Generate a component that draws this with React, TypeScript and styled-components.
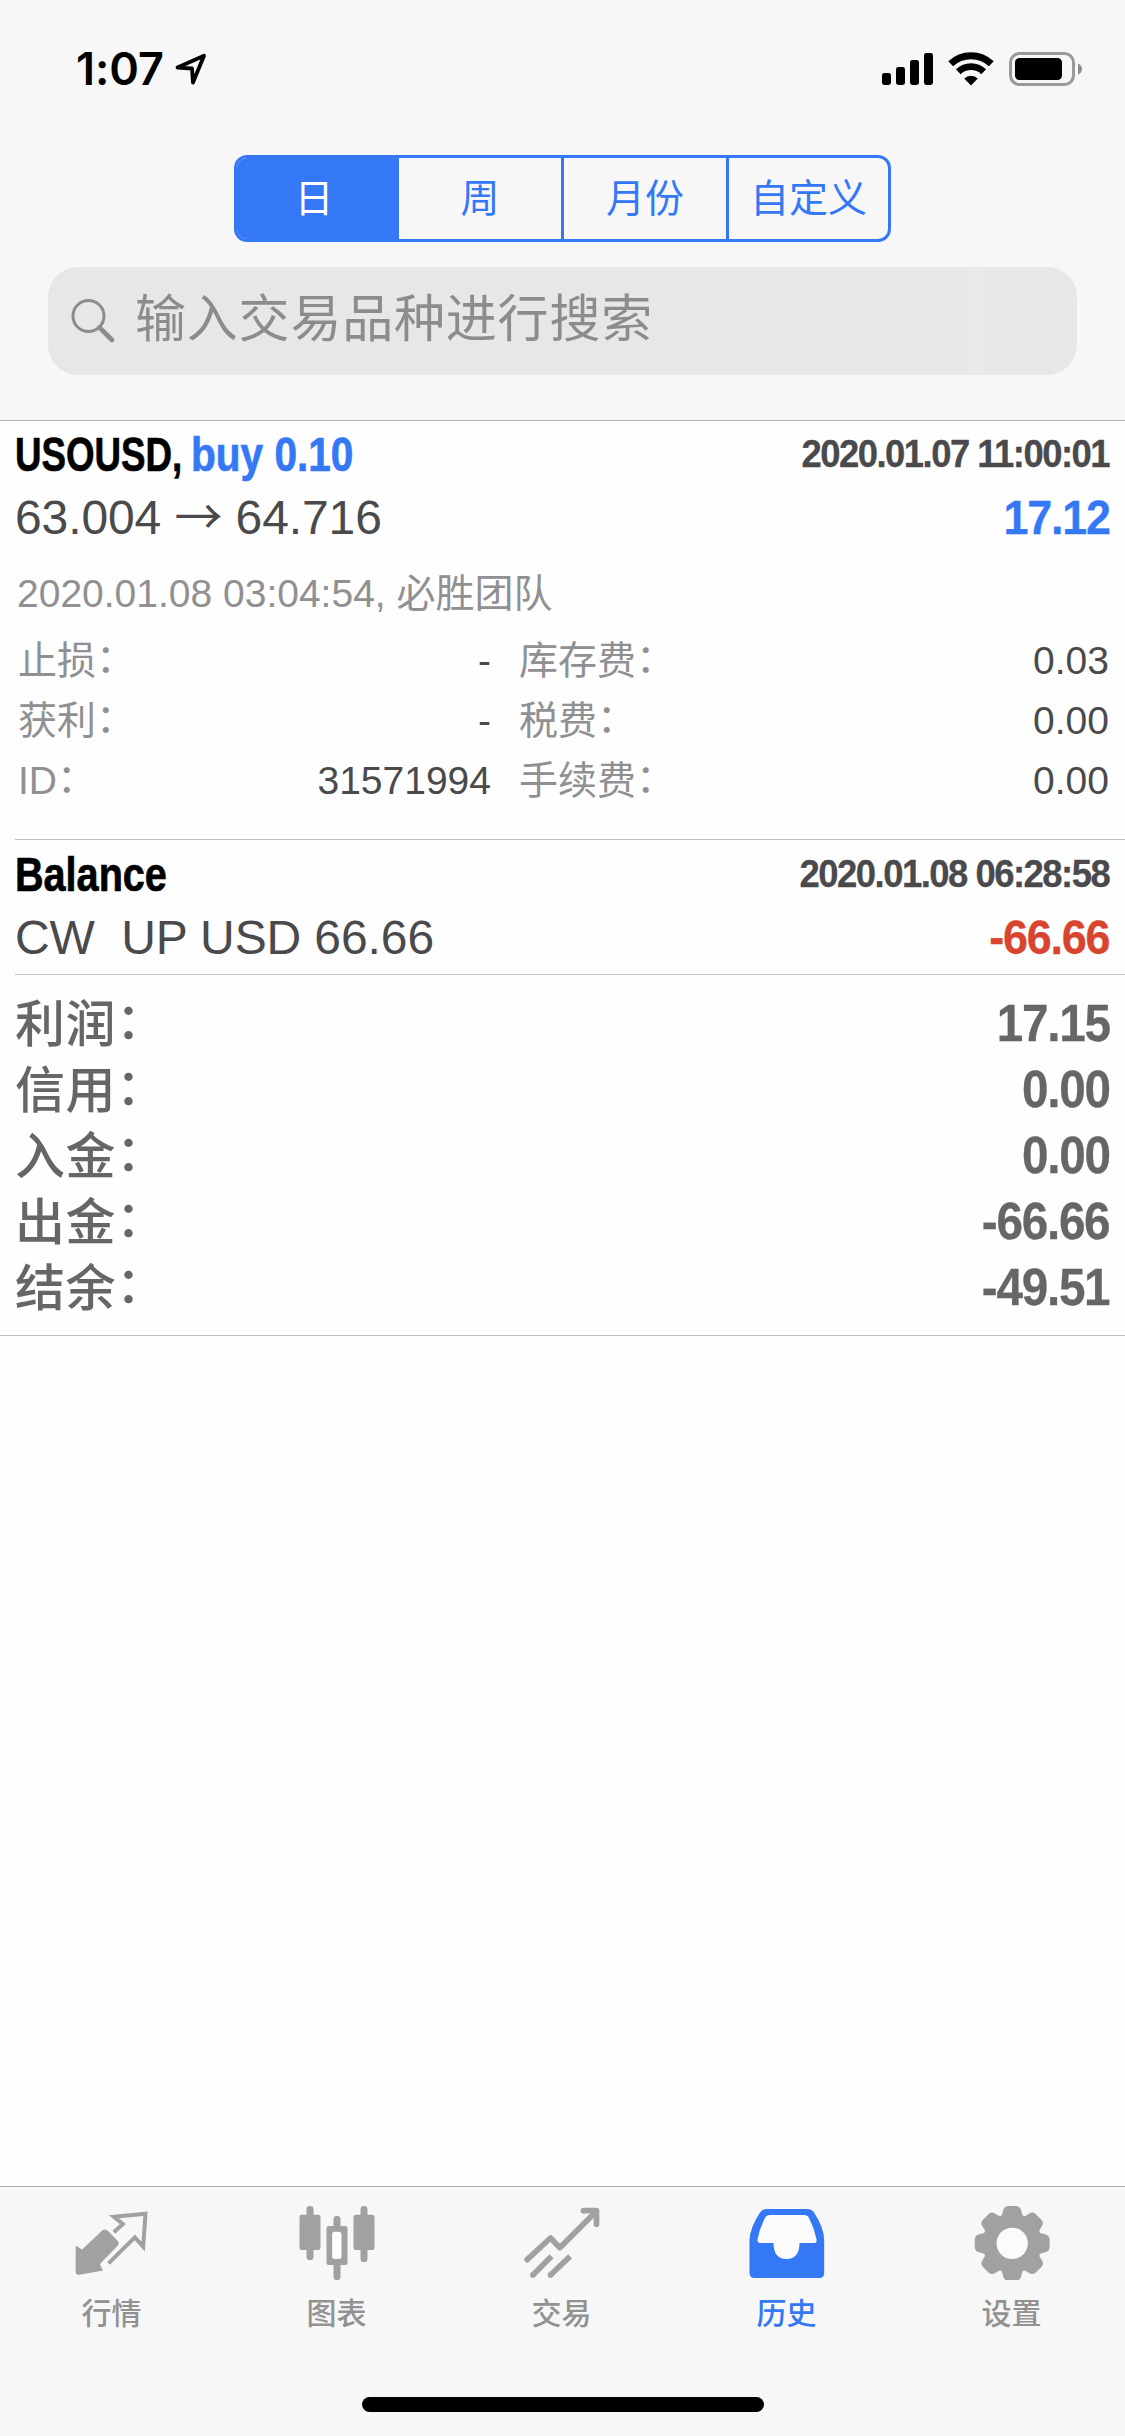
import React from "react";
import styled, { createGlobalStyle } from "styled-components";

const BLUE = "#3478f6";
const RED = "#d9442f";

const GlobalStyle = createGlobalStyle`
  * { box-sizing: border-box; }
  body { margin: 0; background: #fefefe; }
`;

const Screen = styled.div`
  width: 1125px;
  height: 2436px;
  display: flex;
  flex-direction: column;
  overflow: hidden;
  background: #fefefe;
  color: #4a4a4c;
  font-family: "Liberation Sans", "Noto Sans CJK SC", sans-serif;
`;

/* ---------- header ---------- */

const Header = styled.header`
  height: 421px;
  display: flex;
  flex-direction: column;
  background: #f7f7f7;
  border-bottom: 1px solid #b2b2b2;
`;

const StatusBar = styled.div`
  height: 155px;
  padding: 52px 43px 0 76px;
  display: flex;
  justify-content: space-between;
  align-items: flex-start;
`;

const StatusGroup = styled.div<{ $gap: number }>`
  height: 34px;
  display: flex;
  align-items: center;
  gap: ${(p) => p.$gap}px;
`;

const Clock = styled.span`
  font: 600 45px/34px Inter, sans-serif;
  letter-spacing: -0.1px;
  color: #000;
`;

const Segments = styled.nav`
  width: 657px;
  height: 87px;
  margin-left: 234px;
  display: grid;
  grid-template-columns: 162px 165px 165px 159px;
  border: 3px solid ${BLUE};
  border-radius: 13px;
  overflow: hidden;
`;

const Segment = styled.div<{ $active?: boolean }>`
  display: flex;
  align-items: center;
  justify-content: center;
  font-size: 39px;
  line-height: 60px;
  padding: 1px ${(p) => (p.$active ? 5 : 0)}px 0 0;
  color: ${(p) => (p.$active ? "#fff" : BLUE)};
  background: ${(p) => (p.$active ? BLUE : "transparent")};
  &:not(:last-child) { border-right: 3px solid ${BLUE}; }
`;

const SearchField = styled.div`
  width: 1029px;
  height: 108px;
  margin: 25px 0 0 48px;
  padding: 0 23px;
  display: flex;
  align-items: center;
  gap: 20px;
  border-radius: 30px;
  color: #8c8c8c;
  font-size: 51px;
  line-height: 60px;
  letter-spacing: 0.8px;
  background: linear-gradient(90deg, #e7e7e7 920px, #e9e9e9 920px, #e9e9e9 936px, #e7e7e7 936px);
`;

const Placeholder = styled.span`
  margin-bottom: 3px;
`;

/* ---------- history list ---------- */

const Entry = styled.section`
  margin-left: 15px;
  padding-right: 16px;
  border-bottom: 1px solid #bebebf;
  display: flex;
  flex-direction: column;
`;

const TradeEntry = styled(Entry)`
  height: 419px;
  padding-top: 10px;
`;

const BalanceEntry = styled(Entry)`
  height: 135px;
  padding-top: 11px;
`;

const Line = styled.div`
  display: flex;
  justify-content: space-between;
  height: 48px;
  & + & { margin-top: 15px; }
`;

const Title = styled.div`
  display: flex;
`;

const Condensed = styled.span<{ $width: number; $scale: number; $color?: string }>`
  width: ${(p) => p.$width}px;
  font-size: 48px;
  line-height: 48px;
  font-weight: 700;
  white-space: nowrap;
  color: ${(p) => p.$color ?? "#000"};
  transform: scaleX(${(p) => p.$scale});
  transform-origin: 0 50%;
  -webkit-text-stroke: 0.7px currentColor;
`;

const Tight = styled.span<{ $size: number; $color?: string }>`
  font-size: ${(p) => p.$size}px;
  font-weight: 700;
  line-height: ${(p) => (p.$size === 39 ? 46 : p.$size === 51 ? 66 : 48)}px;
  letter-spacing: ${(p) => (p.$size === 39 ? -1.63 : -0.027 * p.$size)}px;
  margin-right: ${(p) => (p.$size === 39 ? 0 : -0.6)}px;
  white-space: nowrap;
  color: ${(p) => p.$color ?? "#4a4a4c"};
  transform: scaleX(0.935);
  transform-origin: 100% 50%;
  -webkit-text-stroke: 0.3px currentColor;
`;

const Prices = styled.span`
  font-size: 48px;
  line-height: 48px;
  letter-spacing: -0.1px;
  white-space: pre;
`;

const Arrow = styled.span`
  font-family: "Noto Sans CJK SC", sans-serif;
  line-height: 0;
`;

const Comment = styled.div`
  margin: 22px 0 7px 2px;
  font-size: 39px;
  line-height: 60px;
  color: #909092;
`;

const Details = styled.div`
  padding-left: 3px;
  display: grid;
  grid-template-columns: 473px 1fr;
  column-gap: 28px;
`;

const Detail = styled.div`
  display: flex;
  justify-content: space-between;
  height: 60px;
  font-size: 39px;
  line-height: 60px;
`;

const DetailLabel = styled.span`
  color: #909092;
`;

const Colon = styled.span`
  position: relative;
  top: -0.06em;
`;

const Summary = styled.section`
  height: 361px;
  padding: 16px 16px 0 15px;
  border-bottom: 1px solid #bebebf;
`;

const SummaryRow = styled.div`
  display: flex;
  justify-content: space-between;
  height: 66px;
  color: #666;
`;

const SummaryLabel = styled.span`
  font-size: 50px;
  line-height: 68px;
  font-weight: 500;
  letter-spacing: 0.5px;
`;

/* ---------- tab bar ---------- */

const TabBar = styled.footer`
  height: 250px;
  margin-top: auto;
  display: flex;
  flex-direction: column;
  align-items: center;
  background: #f7f7f7;
  border-top: 1px solid #b0b0b0;
`;

const Tabs = styled.nav`
  width: 100%;
  height: 210px;
  display: grid;
  grid-template-columns: repeat(5, 1fr);
`;

const Tab = styled.div<{ $active?: boolean }>`
  padding-top: 13px;
  display: flex;
  flex-direction: column;
  align-items: center;
  color: ${(p) => (p.$active ? BLUE : "#a1a1a1")};
`;

const TabLabel = styled.span<{ $active?: boolean }>`
  margin: 14px 2px 0 0;
  font-size: 30px;
  line-height: 40px;
  font-weight: 500;
  color: ${(p) => (p.$active ? BLUE : "#929292")};
`;

const HomeIndicator = styled.div`
  width: 402px;
  height: 15px;
  border-radius: 8px;
  background: #000;
`;

/* ---------- icons ---------- */

const LocationIcon = () => (
  <svg width="31" height="32" viewBox="0 0 31 32">
    <path d="M2.5 14.5 L29 2.8 L18 29.5 L17 15.5 Z" fill="none" stroke="#000" strokeWidth="3.8" strokeLinejoin="round" />
  </svg>
);

const SignalIcon = () => (
  <svg width="51" height="34" viewBox="0 0 51 34">
    <rect x="0" y="21" width="9" height="12" rx="2.4" />
    <rect x="14" y="15" width="9" height="18" rx="2.4" />
    <rect x="28" y="8" width="9" height="25" rx="2.4" />
    <rect x="42" y="1" width="9" height="32" rx="2.4" />
  </svg>
);

const WifiIcon = () => (
  <svg width="46" height="34" viewBox="0 0 46 34">
    <g fill="none" stroke="#000">
      <path d="M2.7 11.8 A29.5 29.5 0 0 1 43.3 11.8" strokeWidth="7" />
      <path d="M10.3 19.8 A18.4 18.4 0 0 1 35.7 19.8" strokeWidth="6.8" />
    </g>
    <path d="M23 33.5 L16.2 26.5 A9.8 9.8 0 0 1 29.8 26.5 Z" />
  </svg>
);

const BatteryIcon = () => (
  <svg width="73" height="34" viewBox="0 0 73 34">
    <rect x="1.5" y="1.5" width="63" height="31" rx="9" fill="none" stroke="#9a9a9a" strokeWidth="3" />
    <rect x="6" y="6" width="47" height="22" rx="4.5" />
    <path d="M69 11.5 Q73 13 73 17 Q73 21 69 22.5 Z" fill="#8c8c8c" />
  </svg>
);

const SearchIcon = () => (
  <svg width="44" height="44" viewBox="0 0 44 44" fill="none" stroke="#8c8c8c">
    <circle cx="17.5" cy="17" r="15.5" strokeWidth="3" />
    <path d="M28.5 28.5 L41 41" strokeWidth="4.6" strokeLinecap="round" />
  </svg>
);

const TabSvg = ({ x, children }: { x: number; children: React.ReactNode }) => (
  <svg width="84" height="80" viewBox={`${x} 90 252 240`} fill="currentColor">
    {children}
  </svg>
);

const QuotesIcon = () => (
  <TabSvg x={91.5}>
    <path
      d="M108 231 L125 242 L186 184 Q194 178 201 185 L229 213 Q235 219 229 226 L175 282 L184 300 L116 312 Q108 313 108 306 Z"
      stroke="currentColor"
      strokeWidth="5"
      strokeLinejoin="round"
    />
    <path
      d="M220 187 L247 162 L220 140 L315 131 L308 230 L283 202 L204 280"
      fill="none"
      stroke="currentColor"
      strokeWidth="12"
    />
  </TabSvg>
);

const ChartIcon = () => (
  <TabSvg x={766.5}>
    <rect x="798" y="108" width="21" height="162" rx="10" />
    <rect x="777" y="134" width="63" height="106" rx="7" />
    <rect x="960" y="108" width="21" height="168" rx="10" />
    <rect x="939" y="134" width="63" height="106" rx="7" />
    <rect x="879" y="138" width="21" height="192" rx="10" />
    <rect x="858" y="168" width="63" height="117" rx="7" />
    <rect x="875" y="185" width="28" height="82" rx="8" fill="#fefefe" />
  </TabSvg>
);

const TradeIcon = () => (
  <TabSvg x={121.5}>
    <g fill="none" stroke="currentColor" strokeLinecap="round" strokeLinejoin="round" strokeWidth="17">
      <path d="M140 269 L210 204 L238 233 L346 125" />
      <path d="M309 122 H348 V163" />
    </g>
    <g stroke="currentColor" strokeWidth="17">
      <path d="M213 259 L157 315" />
      <path d="M269 259 L210 315" />
    </g>
    <circle cx="157" cy="315" r="8.5" />
    <circle cx="210" cy="315" r="8.5" />
  </TabSvg>
);

const HistoryIcon = () => (
  <TabSvg x={796.5}>
    <path d="M860 117 H979 Q994 117 1001 128 Q1031 174 1031 210 V309 Q1031 324 1016 324 H822 Q807 324 807 309 V210 Q808 174 838 128 Q845 117 860 117 Z" />
    <path
      d="M869 135 H970 Q981 135 986 145 Q1002 177 1008 208 Q1010 219 1002 219 H957 C957 249 945 267 918 267 C891 267 879 249 879 219 H838 Q829 219 831 208 Q837 177 853 145 Q858 135 869 135 Z"
      fill="#fbfbfb"
    />
  </TabSvg>
);

const gearOutline = (() => {
  const point = (r: number, deg: number) => {
    const a = (deg * Math.PI) / 180;
    return `${(635 + r * Math.sin(a)).toFixed(1)} ${(220 - r * Math.cos(a)).toFixed(1)}`;
  };
  let d = "";
  for (let k = 0; k < 8; k++) {
    const a = k * 45;
    d += `${k ? "L" : "M"}${point(91, a - 19.5)} L${point(105, a - 14.5)} Q${point(113, a - 12)} ${point(113, a - 7)}`;
    d += ` L${point(113, a + 7)} Q${point(113, a + 12)} ${point(105, a + 14.5)} L${point(91, a + 19.5)}`;
    d += ` Q${point(87, a + 22.5)} ${point(91, a + 25.5)} `;
  }
  return d + "Z";
})();

const SettingsIcon = () => (
  <TabSvg x={511.5}>
    <path d={gearOutline} />
    <circle cx="635" cy="220" r="47" fill="#fbfbfb" />
  </TabSvg>
);

/* ---------- data ---------- */

const details: [string, string][] = [
  ["止损", "-"],
  ["库存费", "0.03"],
  ["获利", "-"],
  ["税费", "0.00"],
  ["ID", "31571994"],
  ["手续费", "0.00"],
];

const totals: [string, string][] = [
  ["利润", "17.15"],
  ["信用", "0.00"],
  ["入金", "0.00"],
  ["出金", "-66.66"],
  ["结余", "-49.51"],
];

const tabs = [
  { label: "行情", Icon: QuotesIcon },
  { label: "图表", Icon: ChartIcon },
  { label: "交易", Icon: TradeIcon },
  { label: "历史", Icon: HistoryIcon, active: true },
  { label: "设置", Icon: SettingsIcon },
];

export default function App() {
  return (
    <Screen>
      <GlobalStyle />
      <Header>
        <StatusBar>
          <StatusGroup $gap={11}>
            <Clock>1:07</Clock>
            <LocationIcon />
          </StatusGroup>
          <StatusGroup $gap={15}>
            <SignalIcon />
            <WifiIcon />
            <BatteryIcon />
          </StatusGroup>
        </StatusBar>
        <Segments>
          {["日", "周", "月份", "自定义"].map((label, i) => (
            <Segment key={label} $active={i === 0}>{label}</Segment>
          ))}
        </Segments>
        <SearchField>
          <SearchIcon />
          <Placeholder>输入交易品种进行搜索</Placeholder>
        </SearchField>
      </Header>

      <TradeEntry>
        <Line>
          <Title>
            <Condensed $width={176} $scale={0.765}>USOUSD,</Condensed>
            <Condensed $width={170} $scale={0.845} $color={BLUE}>buy 0.10</Condensed>
          </Title>
          <Tight $size={39}>2020.01.07 11:00:01</Tight>
        </Line>
        <Line>
          <Prices>63.004 <Arrow>→</Arrow> 64.716</Prices>
          <Tight $size={48} $color={BLUE}>17.12</Tight>
        </Line>
        <Comment>2020.01.08 03:04:54, 必胜团队</Comment>
        <Details>
          {details.map(([label, value]) => (
            <Detail key={label}>
              <DetailLabel>{label}<Colon>：</Colon></DetailLabel>
              <span>{value}</span>
            </Detail>
          ))}
        </Details>
      </TradeEntry>

      <BalanceEntry>
        <Line>
          <Title>
            <Condensed $width={176} $scale={0.825}>Balance</Condensed>
          </Title>
          <Tight $size={39}>2020.01.08 06:28:58</Tight>
        </Line>
        <Line>
          <Prices>{"CW  UP USD 66.66"}</Prices>
          <Tight $size={48} $color={RED}>-66.66</Tight>
        </Line>
      </BalanceEntry>

      <Summary>
        {totals.map(([label, value]) => (
          <SummaryRow key={label}>
            <SummaryLabel>{label}<Colon>：</Colon></SummaryLabel>
            <Tight $size={51} $color="#666">{value}</Tight>
          </SummaryRow>
        ))}
      </Summary>

      <TabBar>
        <Tabs>
          {tabs.map(({ label, Icon, active }) => (
            <Tab key={label} $active={active}>
              <Icon />
              <TabLabel $active={active}>{label}</TabLabel>
            </Tab>
          ))}
        </Tabs>
        <HomeIndicator />
      </TabBar>
    </Screen>
  );
}
